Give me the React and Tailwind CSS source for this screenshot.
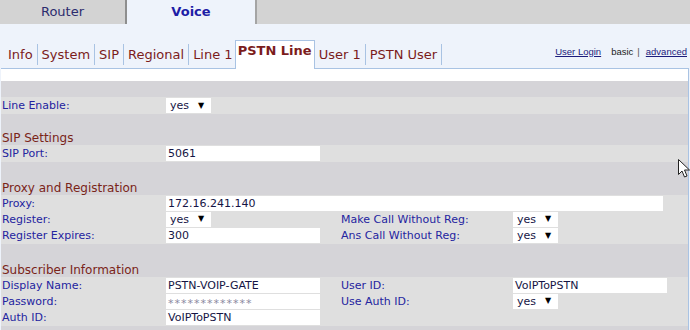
const FONT = "font-['DejaVu_Sans',Verdana,sans-serif]";

const SUB_TABS_LEFT = ["Info", "System", "SIP", "Regional", "Line 1"];
const SUB_TABS_RIGHT = ["User 1", "PSTN User"];

const Label = ({ children }) => (
  <div className="pl-[1px] text-[11px] text-[#2424a0] leading-none">{children}</div>
);

const TextBox = ({ value, w = "w-[154px]", small }) => (
  <div className={`${w} h-[15px] bg-white flex items-center pl-[2px]`}>
    <span
      className={
        small
          ? "text-[11px] tracking-[1px] text-[#8a8aa0] leading-none pt-[4px]"
          : "text-[11px] text-[#151545] leading-none"
      }
    >
      {value}
    </span>
  </div>
);

const Select = ({ value }) => (
  <div className="w-[45px] h-[15px] bg-white flex items-center pl-[4px] gap-[9px]">
    <span className="text-[11px] text-[#151545] leading-none">{value}</span>
    <span className="text-[8px] text-black leading-none">▼</span>
  </div>
);

// one row in the settings table
const Row = ({ h = "h-[16px]", cells = [] }) => (
  <div className={`${h} grid grid-cols-[165px_174px_173px_1fr] items-center bg-[#dfdfdf]`}>
    {cells.map((c, i) => (
      <div key={i} className="flex items-center">
        {c}
      </div>
    ))}
  </div>
);

const Heading = ({ children, h = "h-[17px]" }) => (
  <div className={`${h} bg-[#d5d4d8] flex items-end pb-[1px] pl-[1px]`}>
    <span className="text-[12px] text-[#7a2418] leading-none">{children}</span>
  </div>
);

const Spacer = ({ h = "h-[16px]" }) => <div className={`${h} bg-[#d5d4d8]`} />;

export default function App() {
  return (
    <div className={`relative w-[690px] h-[330px] overflow-hidden bg-[#eef3fb] ${FONT}`}>
      {/* main tabs */}
      <div className="h-[24px] bg-[#d3d3d3] flex">
        <div className="w-[127px] flex items-center justify-center text-[13px] text-[#2c2c6e] border-r-2 border-[#8e8e8e]">
          Router
        </div>
        <div className="w-[128px] bg-[#eef3fb] flex items-center justify-center text-[13px] font-bold text-[#1d1da6]">
          Voice
        </div>
        <div className="w-[2px] bg-[#a4a4a4]" />
        <div className="flex-1" />
      </div>

      {/* sub tabs */}
      <div className="h-[44px] flex items-end pl-[4px] pr-[3px]">
        <div className="flex items-center h-[28px]">
          {SUB_TABS_LEFT.map((t, i) => (
            <div
              key={t}
              className={`px-[4px] text-[13px] text-[#7b1c1c] leading-[21px] ${
                i < SUB_TABS_LEFT.length - 1 ? "border-r border-[#a9c3e3]" : ""
              }`}
            >
              {t}
            </div>
          ))}
        </div>
        <div className="h-[29px] w-[80px] bg-white border border-b-0 border-[#a9c3e3] flex justify-center pt-[2px] mb-[-1px] ml-[-2px] relative z-10">
          <span className="text-[13px] font-bold text-[#7b1c1c] leading-[16px]">PSTN Line</span>
        </div>
        <div className="flex items-center h-[28px]">
          {SUB_TABS_RIGHT.map((t) => (
            <div
              key={t}
              className="px-[4px] text-[13px] text-[#7b1c1c] leading-[21px] border-r border-[#a9c3e3]"
            >
              {t}
            </div>
          ))}
        </div>
        <div className="flex-1" />
        <div className="h-[28px] flex items-center text-[9.5px] leading-none font-['Liberation_Sans',sans-serif] pb-[5px]">
          <span className="underline text-[#1c1c7c]">User Login</span>
          <span className="ml-[10px] text-[#222]">basic</span>
          <span className="ml-[4px] text-[#555]">|</span>
          <span className="ml-[6px] underline text-[#1c1c7c]">advanced</span>
        </div>
      </div>

      {/* form panel */}
      <div className="ml-[1px] w-[688px] border-t border-r border-[#a9c3e3]">
        <div className="h-[12px] bg-white" />
        <Spacer />
        <Row h="h-[17px]" cells={[<Label>Line Enable:</Label>, <Select value="yes" />]} />
        <Spacer h="h-[14px]" />
        <Heading>SIP Settings</Heading>
        <Row h="h-[17px]" cells={[<Label>SIP Port:</Label>, <TextBox value="5061" />]} />
        <Spacer />
        <Heading>Proxy and Registration</Heading>
        <div className="h-[16px] bg-[#dfdfdf] grid grid-cols-[165px_1fr] items-center">
          <Label>Proxy:</Label>
          <TextBox value="172.16.241.140" w="w-[497px]" />
        </div>
        <Row
          cells={[
            <Label>Register:</Label>,
            <Select value="yes" />,
            <Label>Make Call Without Reg:</Label>,
            <Select value="yes" />,
          ]}
        />
        <Row
          h="h-[17px]"
          cells={[
            <Label>Register Expires:</Label>,
            <TextBox value="300" />,
            <Label>Ans Call Without Reg:</Label>,
            <Select value="yes" />,
          ]}
        />
        <Spacer />
        <Heading>Subscriber Information</Heading>
        <Row
          cells={[
            <Label>Display Name:</Label>,
            <TextBox value="PSTN-VOIP-GATE" />,
            <Label>User ID:</Label>,
            <TextBox value="VoIPToPSTN" />,
          ]}
        />
        <Row
          cells={[
            <Label>Password:</Label>,
            <TextBox value="*************" small />,
            <Label>Use Auth ID:</Label>,
            <Select value="yes" />,
          ]}
        />
        <Row h="h-[17px]" cells={[<Label>Auth ID:</Label>, <TextBox value="VoIPToPSTN" />]} />
        <Spacer />
      </div>

      {/* mouse pointer */}
      <svg className="absolute left-[678px] top-[159px]" width="13" height="20" viewBox="0 0 13 20">
        <path
          d="M0.5 0.5 L0.5 15.5 L4 12 L6.5 18 L9 17 L6.5 11 L11.5 11 Z"
          fill="white"
          stroke="#222"
          strokeWidth="1"
          strokeLinejoin="round"
        />
      </svg>
    </div>
  );
}
